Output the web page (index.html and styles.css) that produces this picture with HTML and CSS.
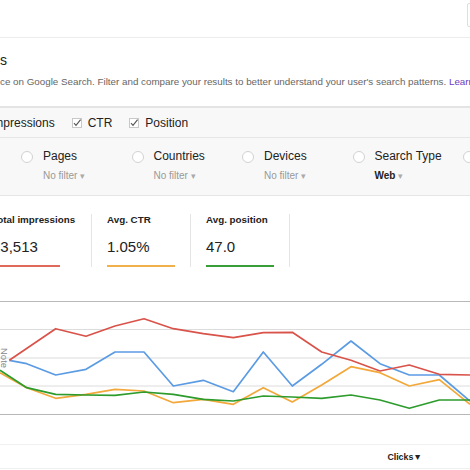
FILE: index.html
```html
<!DOCTYPE html>
<html>
<head>
<meta charset="utf-8">
<link rel="stylesheet" href="styles.css">
</head>
<body>
<div class="page">
  <div class="topbar"><div class="searchbox"></div></div>
  <div class="intro">
    <div class="title">s</div>
    <p class="desc">ce on Google Search. Filter and compare your results to better understand your user's search patterns. <a class="learn" href="#">Learn more</a></p>
  </div>
  <div class="band">
    <div class="checks">
      <label class="check"><svg class="cbox" viewBox="0 0 10 10" width="10" height="10"><rect x="0.5" y="0.5" width="9" height="9" fill="#fff" stroke="#c8c8c8"/><path d="M2 5.2 L4 7.3 L8.6 1.6" fill="none" stroke="#555" stroke-width="1.1"/></svg><span>Impressions</span></label>
      <label class="check"><svg class="cbox" viewBox="0 0 10 10" width="10" height="10"><rect x="0.5" y="0.5" width="9" height="9" fill="#fff" stroke="#c8c8c8"/><path d="M2 5.2 L4 7.3 L8.6 1.6" fill="none" stroke="#555" stroke-width="1.1"/></svg><span>CTR</span></label>
      <label class="check"><svg class="cbox" viewBox="0 0 10 10" width="10" height="10"><rect x="0.5" y="0.5" width="9" height="9" fill="#fff" stroke="#c8c8c8"/><path d="M2 5.2 L4 7.3 L8.6 1.6" fill="none" stroke="#555" stroke-width="1.1"/></svg><span>Position</span></label>
    </div>
    <div class="filters">
      <div class="filter"><span class="radio"></span><div><div class="flabel">Pages</div><div class="fsub">No filter <span class="caret">▾</span></div></div></div>
      <div class="filter"><span class="radio"></span><div><div class="flabel">Countries</div><div class="fsub">No filter <span class="caret">▾</span></div></div></div>
      <div class="filter"><span class="radio"></span><div><div class="flabel">Devices</div><div class="fsub">No filter <span class="caret">▾</span></div></div></div>
      <div class="filter"><span class="radio"></span><div><div class="flabel">Search Type</div><div class="fsub strong">Web <span class="caret">▾</span></div></div></div>
      <div class="filter"><span class="radio"></span><div><div class="flabel">Dates</div><div class="fsub">No filter <span class="caret">▾</span></div></div></div>
    </div>
  </div>
  <div class="metrics">
    <div class="metric first"><div class="mlabel">Total impressions</div><div class="mvalue">13,513</div><div class="mbar red"></div></div>
    <div class="metric"><div class="mlabel">Avg. CTR</div><div class="mvalue">1.05%</div><div class="mbar orange"></div></div>
    <div class="metric"><div class="mlabel">Avg. position</div><div class="mvalue">47.0</div><div class="mbar green"></div></div>
  </div>
  <div class="chart">
    <svg width="470" height="168" viewBox="0 0 470 168">
      <line x1="0" y1="25.5" x2="470" y2="25.5" stroke="#b8b8b8" stroke-width="1"/>
      <line x1="0" y1="53.5" x2="470" y2="53.5" stroke="#dcdcdc" stroke-width="1"/>
      <line x1="0" y1="82" x2="470" y2="82" stroke="#dcdcdc" stroke-width="1"/>
      <line x1="0" y1="110" x2="470" y2="110" stroke="#dcdcdc" stroke-width="1"/>
      <line x1="0" y1="138.5" x2="470" y2="138.5" stroke="#b8b8b8" stroke-width="1"/>
      <polyline fill="none" stroke="#5b9be3" stroke-width="1.7" stroke-linejoin="round" points="9.3,84.3 26.7,87.7 55.7,99 86,93.3 115,76 144,76 173.3,110 203.3,104.3 233.3,115.7 263.3,76 292.3,110 321.7,88.3 351,65 380,87.7 409.3,99 439.3,99 470,125"/>
      <polyline fill="none" stroke="#d9534a" stroke-width="1.7" stroke-linejoin="round" points="9.3,84.3 55.7,52.7 86,60.3 115,50 144,42.7 173.3,52.7 203.3,57.7 233.3,61.7 263.3,56.7 292.3,56.3 321.7,76 351,84.3 380,95 409.3,89 439.3,98.3 470,99"/>
      <polyline fill="none" stroke="#f2a83a" stroke-width="1.7" stroke-linejoin="round" points="0,96.7 26.7,111.7 55.7,122.3 86,118.3 115,113.3 144,115 173.3,126.7 203.3,123.3 233.3,128.3 263.3,111.7 292.3,126 321.7,109 351,90.7 380,96.7 409.3,110 439.3,103.7 470,128.3"/>
      <polyline fill="none" stroke="#2d9c2d" stroke-width="1.7" stroke-linejoin="round" points="0,94.3 26.7,111.7 55.7,118.3 86,119 115,119.3 144,116 173.3,118.3 203.3,123.3 233.3,125 263.3,120 292.3,121 321.7,122.3 351,119 380,124 409.3,132.3 439.3,124 470,124"/>
      <text x="1" y="72" transform="rotate(90 1 72)" class="note">Note</text>
    </svg>
  </div>
  <div class="legend"><span class="clicks">Clicks▼</span></div>
</div>
</body>
</html>
```
FILE: styles.css
```css
html, body {
  margin: 0;
  padding: 0;
  background: #fff;
}
body {
  font-family: "Liberation Sans", Arial, sans-serif;
  color: #222;
  width: 470px;
  height: 470px;
  overflow: hidden;
}
.page {
  width: 470px;
  overflow: hidden;
}
.topbar {
  height: 37px;
  border-bottom: 1px solid #ececec;
  display: flex;
  justify-content: flex-end;
  align-items: flex-start;
}
.searchbox {
  width: 30px;
  height: 22px;
  margin-top: 3px;
  margin-right: -29px;
  border: 1px solid #dedede;
  border-radius: 2px;
}
.intro {
  padding: 12px 0 17px 0;
  border-bottom: 2px solid #e4e4e4;
}
.title {
  font-size: 14px;
  line-height: 20px;
  height: 20px;
  color: #222;
}
.desc {
  margin: 5px 0 0 0;
  font-size: 9.8px;
  line-height: 14px;
  color: #666;
  white-space: nowrap;
}
.learn {
  color: #6d3bbf;
  text-decoration: none;
}
.band {
  background: #f8f8f8;
  border-bottom: 1px solid #e6e6e6;
}
.checks {
  height: 29px;
  display: flex;
  align-items: center;
  gap: 17px;
  margin-left: -26px;
  border-bottom: 1px solid #e6e6e6;
  font-size: 12px;
  white-space: nowrap;
}
.check {
  display: flex;
  align-items: center;
  gap: 6px;
  color: #222;
}
.cbox {
  display: block;
  flex: none;
}
.filters {
  display: grid;
  grid-template-columns: repeat(5, 110.5px);
  padding: 11px 0 12px 21px;
  white-space: nowrap;
}
.filter {
  display: flex;
  align-items: flex-start;
  gap: 10px;
}
.radio {
  flex: none;
  width: 10px;
  height: 10px;
  margin-top: 2px;
  border: 1px solid #d2d2d2;
  border-radius: 50%;
  background: #fff;
}
.flabel {
  font-size: 12px;
  line-height: 15px;
  color: #222;
}
.fsub {
  margin-top: 5px;
  font-size: 10px;
  line-height: 13px;
  color: #999;
}
.fsub.strong {
  color: #222;
  font-weight: bold;
}
.caret {
  color: #aaa;
  font-size: 9px;
  font-weight: normal;
}
.metrics {
  display: flex;
  padding: 18px 0 9px 0;
  margin-left: -8px;
  white-space: nowrap;
}
.metric {
  width: 83px;
  padding-left: 15px;
  border-right: 1px solid #e4e4e4;
  height: 53px;
}
.metric.first {
  width: 99px;
  padding-left: 0;
}
.mlabel {
  font-size: 9.8px;
  line-height: 12px;
  font-weight: bold;
  color: #222;
}
.mvalue {
  margin-top: 12px;
  font-size: 15px;
  line-height: 18px;
  color: #222;
}
.mbar {
  margin-top: 9px;
  width: 68px;
  height: 2px;
}
.mbar.red { background: #df6a5c; }
.mbar.orange { background: #f0b04a; }
.mbar.green { background: #3a9e38; }
.chart {
  height: 168px;
}
.chart svg {
  display: block;
}
.note {
  font-family: "Liberation Sans", Arial, sans-serif;
  font-size: 9.5px;
  fill: #888;
}
.legend {
  height: 23px;
  border-top: 1px solid #f0f0f0;
  border-bottom: 1px solid #f0f0f0;
  display: flex;
  align-items: center;
  justify-content: flex-end;
  padding-right: 48px;
}
.clicks {
  font-size: 8.8px;
  font-weight: bold;
  color: #222;
}
```
